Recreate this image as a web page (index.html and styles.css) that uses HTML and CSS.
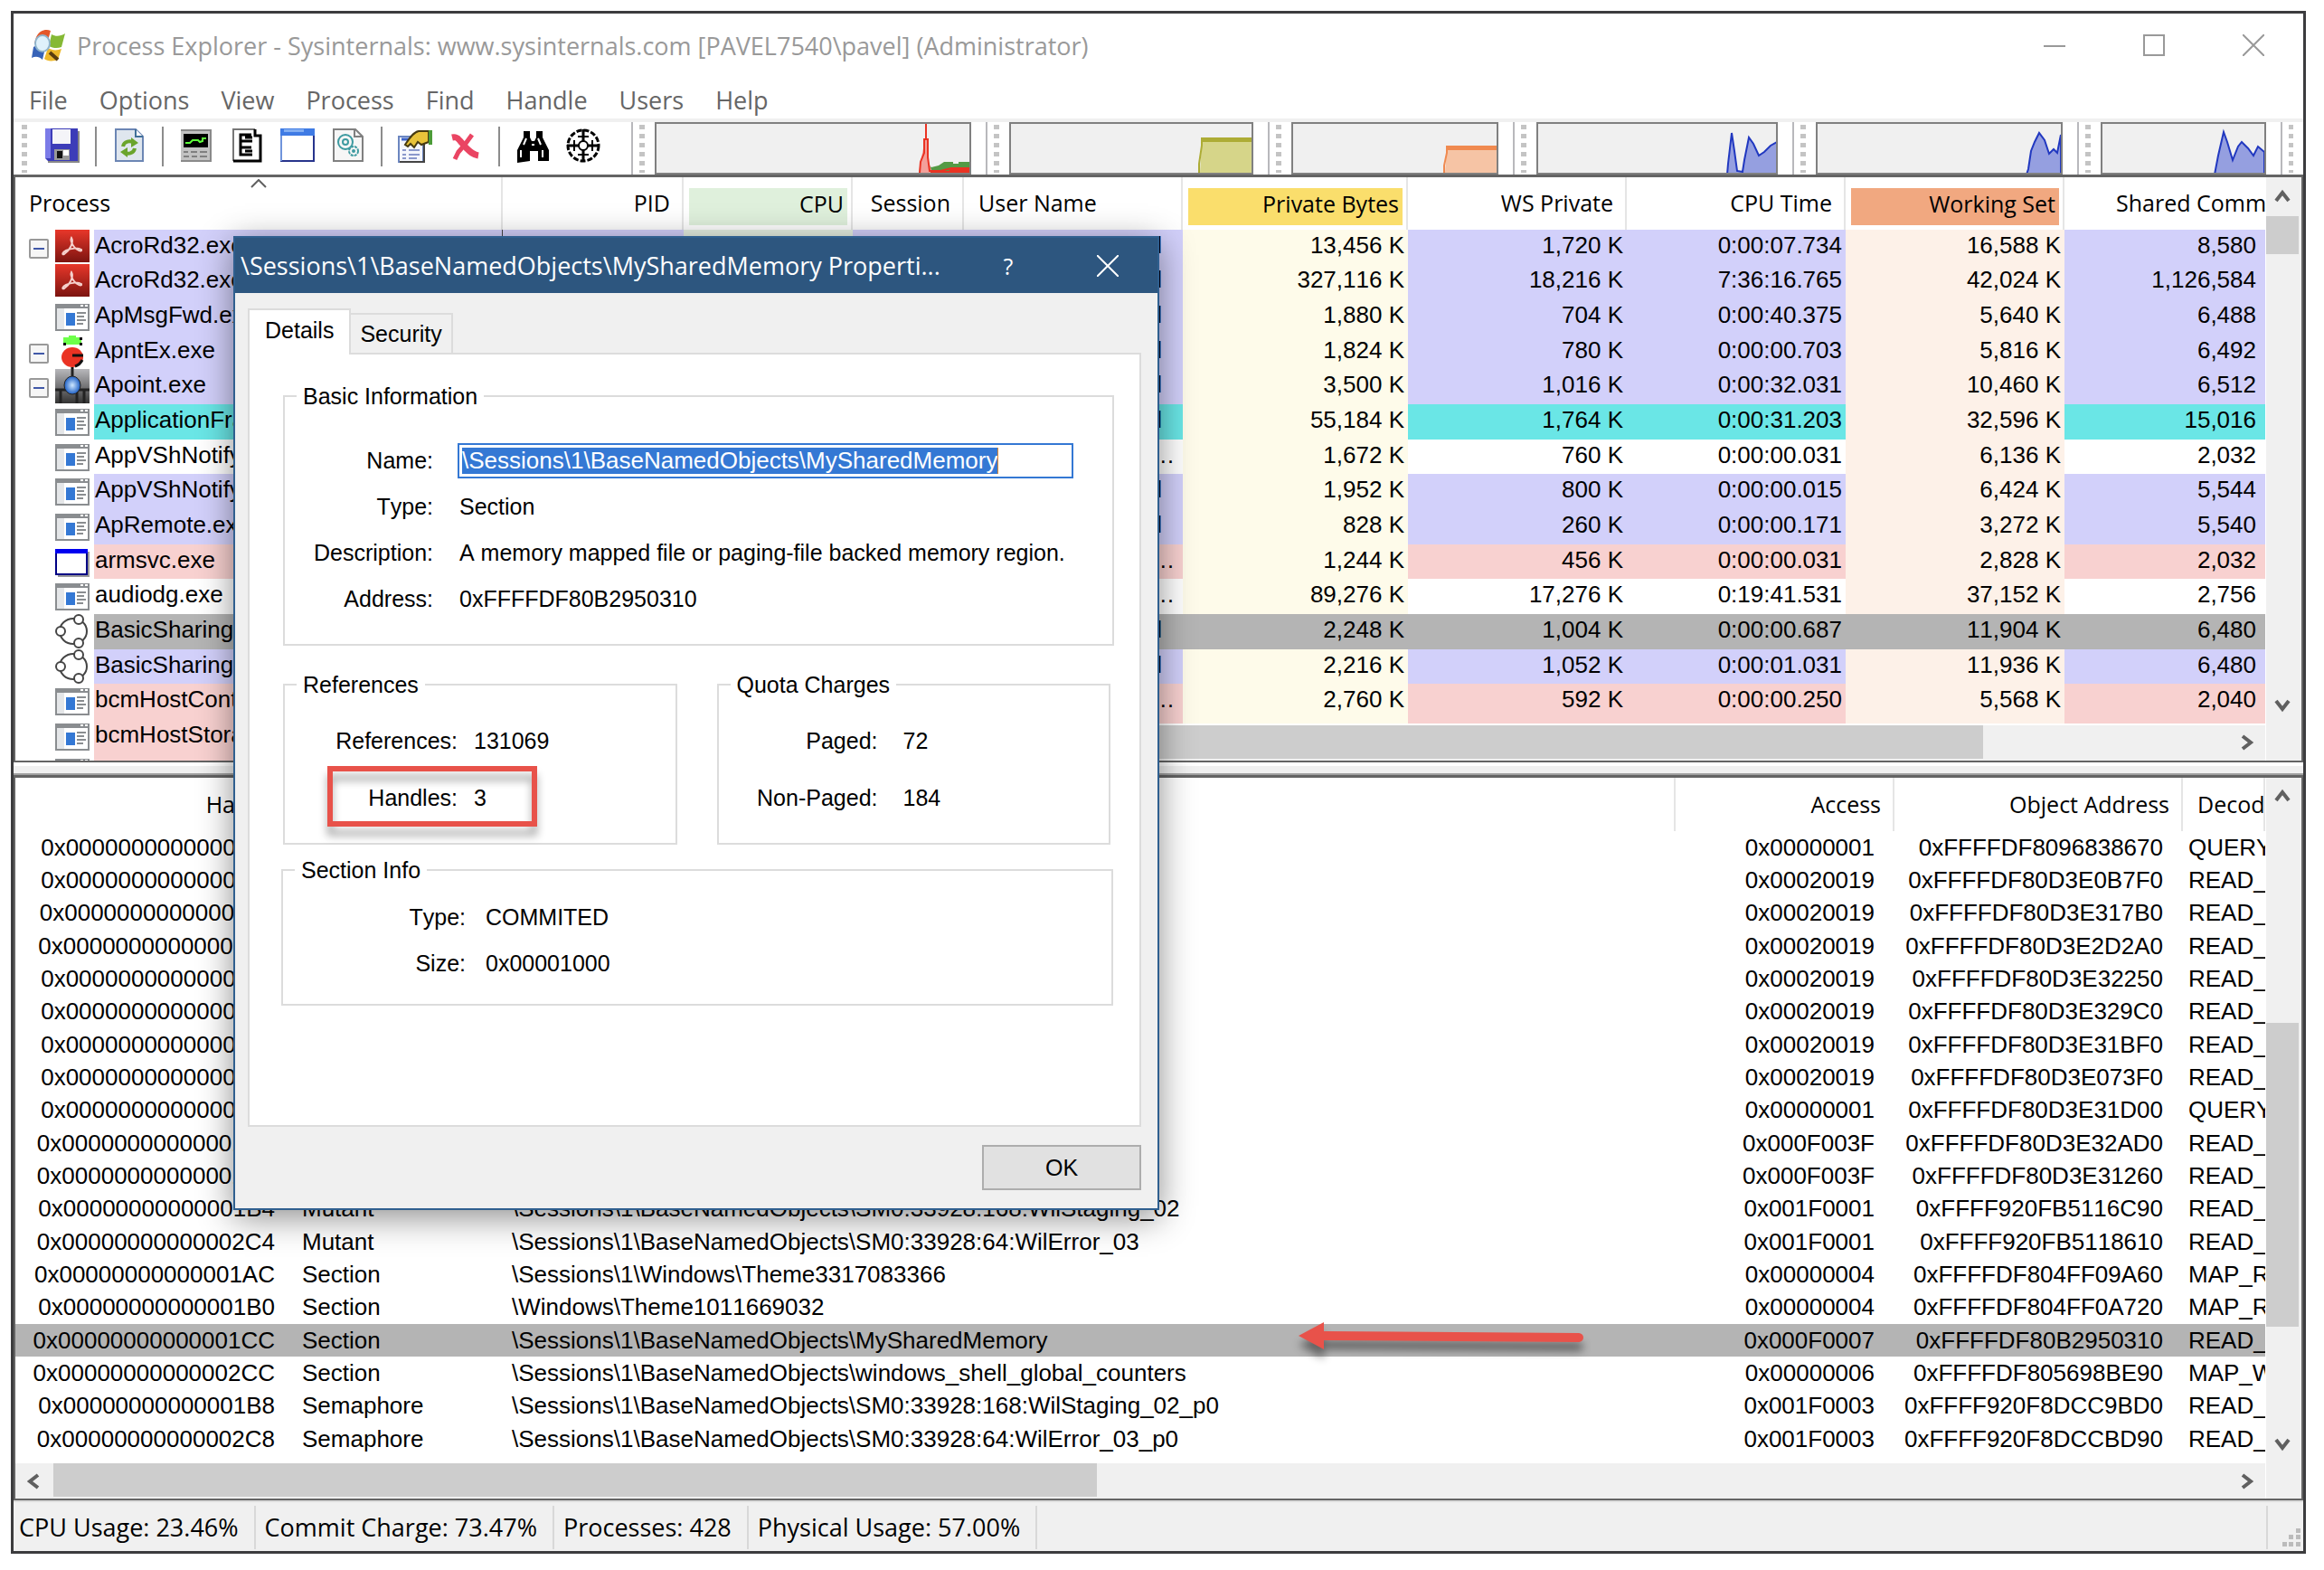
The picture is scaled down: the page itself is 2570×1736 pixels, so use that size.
FILE: index.html
```html
<!DOCTYPE html>
<html lang="en">

<head>
    <meta charset="utf-8">
    <title>Process Explorer</title>
    <meta name="viewport" content="width=device-width, initial-scale=1">
    <link rel="stylesheet" href="styles.css">
</head>

<body>
    <!-- shared icons -->
    <svg class="defs" aria-hidden="true">
        <symbol id="app" viewBox="0 0 38 38">
            <rect x="0" y="5" width="38" height="30" fill="#8a8d90"/>
            <rect x="2" y="10" width="34" height="23" fill="#fff"/>
            <rect x="2" y="10" width="8" height="23" fill="#e4e6e8"/>
            <path d="M28 6h3v2h-3zM33 6h3v2h-3z" fill="#fff"/>
            <rect x="12" y="15" width="10" height="14" fill="#3478d4"/>
            <path d="M24 15h10M24 19h8M24 23h10M24 27h7" stroke="#8a8d90" stroke-width="2"/>
        </symbol>
        <symbol id="acro" viewBox="0 0 38 38">
            <linearGradient id="red" x1="0" y1="0" x2="0" y2="1"><stop offset="0" stop-color="#e8372a"/><stop offset="1" stop-color="#7c1410"/></linearGradient>
            <rect width="38" height="36" fill="url(#red)"/>
            <path d="M18 9c3 5-2 14-8 18-3 1-2-2 2-4 6-3 14-3 17-1 1 3-5 1-8-3-3-4-4-8-3-10z" fill="none" stroke="#f5d0cc" stroke-width="2"/>
        </symbol>
        <symbol id="apnt" viewBox="0 0 38 38">
            <path d="M9 3h6V1h8v2h6v8H9z" fill="#6dff4a"/>
            <path d="M27 3h3v3h-3zM9 9h3v3H9zM27 9h3v3h-3z" fill="#111"/>
            <ellipse cx="19" cy="25" rx="12" ry="11" fill="#ea3323"/>
            <path d="M19 23h12M30 28c-2 4-5 6-8 7M19 36v2" stroke="#111" stroke-width="3" fill="none"/>
        </symbol>
        <symbol id="apoint" viewBox="0 0 38 38">
            <linearGradient id="gry" x1="0" y1="0" x2="0" y2="1"><stop offset="0" stop-color="#b8b8bc"/><stop offset="1" stop-color="#333"/></linearGradient>
            <radialGradient id="ball"><stop offset="0" stop-color="#cfe8ff"/><stop offset="1" stop-color="#1c5ec4"/></radialGradient>
            <rect width="38" height="38" fill="url(#gry)"/>
            <path d="M19 0v8M0 23h38M6 23v15M24 23v15M32 23v15" stroke="#222" stroke-width="3"/>
            <ellipse cx="19" cy="18" rx="9" ry="10" fill="url(#ball)" stroke="#222"/>
        </symbol>
        <symbol id="box" viewBox="0 0 38 38">
            <rect x="3" y="8" width="35" height="28" fill="#999"/>
            <rect x="1" y="6" width="34" height="27" fill="#fff" stroke="#000084" stroke-width="2"/>
            <rect x="0" y="5" width="36" height="5" fill="#0000f0"/>
        </symbol>
        <symbol id="share" viewBox="0 0 38 38">
            <g fill="#fff" stroke="#444" stroke-width="2">
                <ellipse cx="20" cy="19" rx="15" ry="14" fill="none"/>
                <circle cx="6" cy="19" r="5"/><circle cx="26" cy="6" r="5"/><circle cx="26" cy="32" r="5"/>
            </g>
        </symbol>
        <symbol id="chev" viewBox="0 0 20 20">
            <path d="M3 14l7-9 7 9" fill="none" stroke="#606060" stroke-width="4"/>
        </symbol>
    </svg>

    <main class="window">
        <header class="titlebar">
            <svg class="logo" viewBox="0 0 38 36">
                <path d="M5 9c4-8 11-9 16-7l-4 14H3z" fill="#e4582a"/>
                <path d="M22 6c5 3 10 2 15-1l-4 15c-5 2-10 1-14-1z" fill="#85b935"/>
                <path d="M2 20c5-3 9-1 13 1l-3 13c-4-4-8-4-12-2z" fill="#3763b8"/>
                <path d="M18 21c5 3 10 3 15 1l-4 12c-5 2-12 2-15-1z" fill="#edb82a"/>
                <path d="M20 26l9 8" stroke="#5a3d10" stroke-width="4"/>
                <ellipse cx="12" cy="16" rx="8" ry="9" fill="#dff1fb" stroke="#8fb4cc" stroke-width="2"/>
            </svg>
            <h1 class="title">Process Explorer - Sysinternals: www.sysinternals.com [PAVEL7540\pavel] (Administrator)</h1>
            <button class="winbtn" aria-label="Minimize"><svg viewBox="0 0 24 24"><path d="M0 13h24"/></svg></button>
            <button class="winbtn" aria-label="Maximize"><svg viewBox="0 0 24 24"><path d="M1 1h22v22H1z"/></svg></button>
            <button class="winbtn" aria-label="Close"><svg viewBox="0 0 24 24"><path d="M0 0l24 24M24 0L0 24"/></svg></button>
        </header>

        <nav class="menu">
            <button>File</button>
            <button>Options</button>
            <button>View</button>
            <button>Process</button>
            <button>Find</button>
            <button>Handle</button>
            <button>Users</button>
            <button>Help</button>
        </nav>

        <div class="toolbar">
            <div class="tools">
                <span class="grip"></span>
                <button class="tool" aria-label="Save">
                    <svg viewBox="0 0 38 38"><path d="M3 3h35v35H3z" fill="#888"/><path d="M0 0h36v36H3l-3-3z" fill="#3c3cb8"/><path d="M0 0h6v33H0z" fill="#7b7be8"/><path d="M8 1h20v16H8z" fill="#f4f4f8"/><path d="M10 23h17v12H10z" fill="#999"/><path d="M13 25h6v8h-6z" fill="#111"/><path d="M20 24h6v6h-6z" fill="#fff"/></svg>
                </button>
                <span class="sep"></span>
                <button class="tool" aria-label="Refresh">
                    <svg viewBox="0 0 38 38"><path d="M4 1h22l8 8v27H4z" fill="#dfe6ee" stroke="#6c86b4" stroke-width="2"/><path d="M26 1v8h8" fill="#fff" stroke="#3f6f98" stroke-width="2"/><path d="M12 20c1-6 8-7 12-4M25 22c-1 6-8 7-12 4" fill="none" stroke="#6aa42c" stroke-width="4"/><path d="M21 10l8 6-8 5zM17 32l-8-6 8-5z" fill="#6aa42c"/></svg>
                </button>
                <span class="sep"></span>
                <button class="tool" aria-label="System Information">
                    <svg viewBox="0 0 38 38"><path d="M2 2h34v34H2z" fill="#c2c2c2"/><path d="M2 2h34M35 2v34H2" fill="none" stroke="#8a8a8a" stroke-width="2"/><path d="M5 6h27v15H5z" fill="#000"/><path d="M7 16h5l3-3h6l2 2 3-1v-3h4" fill="none" stroke="#5dff3c" stroke-width="2"/><path d="M5 26h5m3 0h7m3 0h8M5 31h6m3 0h6m3 0h8" stroke="#808080" stroke-width="2"/></svg>
                </button>
                <button class="tool" aria-label="Process Tree">
                    <svg viewBox="0 0 38 38"><path d="M4 1h22l8 8v27H4z" fill="#fff"/><path d="M4 36V1h24" fill="none" stroke="#777" stroke-width="2"/><path d="M28 1v7h6v28H4" fill="none" stroke="#000" stroke-width="3"/><path d="M24 7H12v22h13M13 14h12M13 21h11M17 10h8M17 25h8" fill="none" stroke="#000" stroke-width="3"/></svg>
                </button>
                <button class="tool" aria-label="Lower Pane">
                    <svg viewBox="0 0 38 38"><path d="M1 1h36v35H1z" fill="#fff" stroke="#27348c" stroke-width="2"/><path d="M0 0h38v8H0z" fill="#3f7be4"/><path d="M4 1h22v3H4z" fill="#82aef2"/><path d="M1 8v28" stroke="#6f94dc" stroke-width="2"/></svg>
                </button>
                <button class="tool" aria-label="DLL View">
                    <svg viewBox="0 0 38 38"><path d="M3 1h24l8 8v27H3z" fill="#f6f6f6" stroke="#808080" stroke-width="2"/><path d="M26 1v8h9" fill="none" stroke="#808080" stroke-width="2"/><g fill="none" stroke="#3d9aa0" stroke-width="2"><circle cx="16" cy="15" r="8"/><circle cx="16" cy="15" r="3"/><circle cx="25" cy="25" r="5" stroke-dasharray="3 1"/><circle cx="25" cy="25" r="1"/></g></svg>
                </button>
                <span class="sep"></span>
                <button class="tool" aria-label="Properties">
                    <svg viewBox="0 0 38 38"><path d="M1 9h27v28H1z" fill="#f4f6fc" stroke="#6c86c0" stroke-width="2"/><path d="M29 12v25H2" fill="none" stroke="#444" stroke-width="2"/><path d="M4 12h10" stroke="#3b62c8" stroke-width="3"/><path d="M5 24h4m3 0h12M5 29h4m3 0h12M5 33h4m3 0h9" stroke="#8a98cc" stroke-width="2"/><path d="M8 18c4-6 9-14 15-15h11v12l-8 3-4-3-4 6-4-4-3 3z" fill="#e8c33a" stroke="#463a10" stroke-width="2"/><path d="M34 2h4v16h-4z" fill="#4c9c38"/></svg>
                </button>
                <button class="tool" aria-label="Kill Process">
                    <svg viewBox="0 0 38 38"><path d="M4 10c4-1 6 0 9 4l7 8c4 4 7 7 13 8" fill="none" stroke="#ea4563" stroke-width="7"/><path d="M26 7l-8 11-7 8-4 8" fill="none" stroke="#ea4563" stroke-width="5"/></svg>
                </button>
                <span class="sep"></span>
                <button class="tool" aria-label="Find Handle or DLL">
                    <svg viewBox="0 0 38 38"><path d="M2 38V24l7-14V3h7v7l2 4h3l2-4V3h7v7l7 14v12h-12V25h-9v11z" fill="#000"/><path d="M12 11l-3 7M25 11l3 7M6 24v8M30 24v8M18 18h3" stroke="#fff" stroke-width="2"/></svg>
                </button>
                <button class="tool" aria-label="Find Window's Process">
                    <svg viewBox="0 0 38 38"><circle cx="19" cy="19" r="17" fill="#fff" stroke="#000" stroke-width="3" stroke-dasharray="6 2"/><circle cx="19" cy="19" r="5" fill="none" stroke="#000" stroke-width="2"/><path d="M19 1v14M19 23v14M1 19h14M23 19h14" stroke="#000" stroke-width="3"/><path d="M13 9h12M13 29h12M9 13v12M29 13v12" stroke="#000" stroke-width="2"/></svg>
                </button>
            </div>
            <div class="band band-cpu"><span class="grip"></span>
                <div class="graph"><svg viewBox="0 0 60 54">
                    <path d="M7 54V46l5-3 6 5 8-2 6-4h10v2h6v-2h12v12z" fill="#549a45"/>
                    <path d="M4 54l2-12 5-25h3l1 25 4 12z" fill="#f3a09a"/>
                    <path d="M5 54l1-12 4-10V17h2V0v17h2v20l2 15h12l12-3h20" fill="none" stroke="#ea3323" stroke-width="2"/>
                    <path d="M17 52h20l4-4h19v6H17z" fill="#ea3323"/>
                </svg></div>
            </div>
            <div class="band band-commit"><span class="grip"></span>
                <div class="graph"><svg viewBox="0 0 60 54">
                    <path d="M3 54l2-34h55v34z" fill="#d6d589"/><path d="M6 15h54v5H6z" fill="#adac35"/>
                    <path d="M2 54V44l3-20V15" fill="none" stroke="#adac35" stroke-width="2"/>
                </svg></div>
            </div>
            <div class="band band-mem"><span class="grip"></span>
                <div class="graph"><svg viewBox="0 0 60 54">
                    <path d="M3 54l2-26h55v26z" fill="#f6c4a5"/><path d="M6 24h54v5H6z" fill="#f08a50"/>
                    <path d="M2 54v-8l3-14v-8" fill="none" stroke="#f08a50" stroke-width="2"/>
                </svg></div>
            </div>
            <div class="band band-io"><span class="grip"></span>
                <div class="graph"><svg viewBox="0 0 60 54">
                    <path class="io" d="M6 56l1-12 4-34 3 20 3 22 6 1 2-13 5-25 5 7 6 13 6-4 7-7 7-4v36z"/>
                </svg></div>
            </div>
            <div class="band band-net"><span class="grip"></span>
                <div class="graph"><svg viewBox="0 0 60 54">
                    <path class="io" d="M22 56l2-6 3-20 4-10 5-10 6 8 5 15 5-5 4 4 4-20v44z"/>
                </svg></div>
            </div>
            <div class="band band-disk"><span class="grip"></span>
                <div class="graph"><svg viewBox="0 0 60 54">
                    <path class="io" d="M5 56l4-21 6-26 4 11 6 20 6-15 4-5 7 7 6 8 5-10 7 6v25z"/>
                </svg></div>
            </div>
            <div class="band band-end"><span class="grip"></span></div>
        </div>

        <section class="pane pane-top">
            <table class="list procs">
                <thead><tr><th><span>Process</span><svg class="sort" viewBox="0 0 18 10"><path d="M1 9l8-8 8 8"/></svg></th></tr></thead>
                <tbody>
                    <tr class="own"><td><div><button class="toggle" aria-label="Collapse"></button><svg><use href="#acro"/></svg><span>AcroRd32.exe</span></div></td></tr>
                    <tr class="own"><td><div><svg><use href="#acro"/></svg><span>AcroRd32.exe</span></div></td></tr>
                    <tr class="own"><td><div><svg><use href="#app"/></svg><span>ApMsgFwd.exe</span></div></td></tr>
                    <tr class="own"><td><div><button class="toggle" aria-label="Collapse"></button><svg><use href="#apnt"/></svg><span>ApntEx.exe</span></div></td></tr>
                    <tr class="own"><td><div><button class="toggle" aria-label="Collapse"></button><svg><use href="#apoint"/></svg><span>Apoint.exe</span></div></td></tr>
                    <tr class="immersive"><td><div><svg><use href="#app"/></svg><span>ApplicationFrameHost.exe</span></div></td></tr>
                    <tr><td><div><svg><use href="#app"/></svg><span>AppVShNotify.exe</span></div></td></tr>
                    <tr class="own"><td><div><svg><use href="#app"/></svg><span>AppVShNotify.exe</span></div></td></tr>
                    <tr class="own"><td><div><svg><use href="#app"/></svg><span>ApRemote.exe</span></div></td></tr>
                    <tr class="service"><td><div><svg><use href="#box"/></svg><span>armsvc.exe</span></div></td></tr>
                    <tr><td><div><svg><use href="#app"/></svg><span>audiodg.exe</span></div></td></tr>
                    <tr class="selected"><td><div><svg><use href="#share"/></svg><span>BasicSharing.exe</span></div></td></tr>
                    <tr class="own"><td><div><svg><use href="#share"/></svg><span>BasicSharing.exe</span></div></td></tr>
                    <tr class="service"><td><div><svg><use href="#app"/></svg><span>bcmHostControl.exe</span></div></td></tr>
                    <tr class="service"><td><div><svg><use href="#app"/></svg><span>bcmHostStorage.exe</span></div></td></tr>
                    <tr class="service"><td><div><svg><use href="#app"/></svg><span>bcmUshUpgrade.exe</span></div></td></tr>
                </tbody>
            </table>
            <div class="main">
                <div class="clip">
                    <table class="list stats">
                        <colgroup><col class="w-pid"><col class="w-cpu"><col class="w-ses"><col class="w-user"><col class="w-priv"><col class="w-num"><col class="w-num"><col class="w-num"><col></colgroup>
                        <thead>
                            <tr><th>PID</th><th class="h-cpu"><span>CPU</span></th><th>Session</th><th class="left">User Name</th><th class="h-priv"><span>Private Bytes</span></th><th>WS Private</th><th>CPU Time</th><th class="h-work"><span>Working Set</span></th><th class="h-last">Shared Commit</th></tr>
                        </thead>
                        <tbody>
                            <tr class="own"><td>36112</td><td></td><td>1</td><td>PAVEL7540\pavel</td><td>13,456 K</td><td>1,720 K</td><td>0:00:07.734</td><td>16,588 K</td><td>8,580</td></tr>
                            <tr class="own"><td></td><td></td><td></td><td>PAVEL7540\pavel</td><td>327,116 K</td><td>18,216 K</td><td>7:36:16.765</td><td>42,024 K</td><td>1,126,584</td></tr>
                            <tr class="own"><td></td><td></td><td></td><td>PAVEL7540\pavel</td><td>1,880 K</td><td>704 K</td><td>0:00:40.375</td><td>5,640 K</td><td>6,488</td></tr>
                            <tr class="own"><td></td><td></td><td></td><td>PAVEL7540\pavel</td><td>1,824 K</td><td>780 K</td><td>0:00:00.703</td><td>5,816 K</td><td>6,492</td></tr>
                            <tr class="own"><td></td><td></td><td></td><td>PAVEL7540\pavel</td><td>3,500 K</td><td>1,016 K</td><td>0:00:32.031</td><td>10,460 K</td><td>6,512</td></tr>
                            <tr class="immersive"><td></td><td></td><td></td><td>PAVEL7540\pavel</td><td>55,184 K</td><td>1,764 K</td><td>0:00:31.203</td><td>32,596 K</td><td>15,016</td></tr>
                            <tr><td></td><td></td><td></td><td>NT AUTHORITY\SYSTEM</td><td>1,672 K</td><td>760 K</td><td>0:00:00.031</td><td>6,136 K</td><td>2,032</td></tr>
                            <tr class="own"><td></td><td></td><td></td><td>PAVEL7540\pavel</td><td>1,952 K</td><td>800 K</td><td>0:00:00.015</td><td>6,424 K</td><td>5,544</td></tr>
                            <tr class="own"><td></td><td></td><td></td><td>PAVEL7540\pavel</td><td>828 K</td><td>260 K</td><td>0:00:00.171</td><td>3,272 K</td><td>5,540</td></tr>
                            <tr class="service"><td></td><td></td><td></td><td>NT AUTHORITY\SYSTEM</td><td>1,244 K</td><td>456 K</td><td>0:00:00.031</td><td>2,828 K</td><td>2,032</td></tr>
                            <tr><td></td><td></td><td></td><td>NT AUTHORITY\SYSTEM</td><td>89,276 K</td><td>17,276 K</td><td>0:19:41.531</td><td>37,152 K</td><td>2,756</td></tr>
                            <tr class="selected"><td></td><td></td><td></td><td>PAVEL7540\pavel</td><td>2,248 K</td><td>1,004 K</td><td>0:00:00.687</td><td>11,904 K</td><td>6,480</td></tr>
                            <tr class="own"><td></td><td></td><td></td><td>PAVEL7540\pavel</td><td>2,216 K</td><td>1,052 K</td><td>0:00:01.031</td><td>11,936 K</td><td>6,480</td></tr>
                            <tr class="service"><td></td><td></td><td></td><td>NT AUTHORITY\SYSTEM</td><td>2,760 K</td><td>592 K</td><td>0:00:00.250</td><td>5,568 K</td><td>2,040</td></tr>
                            <tr class="service"><td></td><td></td><td></td><td></td><td></td><td></td><td></td><td></td><td></td></tr>
                        </tbody>
                    </table>
                </div>
                <div class="hbar">
                    <button class="left" aria-label="Scroll left"><svg><use href="#chev"/></svg></button>
                    <div class="track"><i class="thumb thumb-h1"></i></div>
                    <button class="right" aria-label="Scroll right"><svg><use href="#chev"/></svg></button>
                </div>
            </div>
            <div class="vbar">
                <button aria-label="Scroll up"><svg><use href="#chev"/></svg></button>
                <div class="track"><i class="thumb thumb-v1"></i></div>
                <button class="down" aria-label="Scroll down"><svg><use href="#chev"/></svg></button>
            </div>
        </section>

        <div class="splitter"></div>

        <section class="pane pane-bottom">
            <div class="main">
                <div class="clip">
                    <table class="list handles">
                        <colgroup><col class="w-handle"><col class="w-type"><col><col class="w-num"><col class="w-addr"><col class="w-dec"></colgroup>
                        <thead><tr><th>Handle</th><th class="left">Type</th><th class="left">Name</th><th>Access</th><th>Object Address</th><th class="left">Decoded Access</th></tr></thead>
                        <tbody>
                            <tr><td>0x0000000000000100</td><td></td><td></td><td>0x00000001</td><td>0xFFFFDF8096838670</td><td>QUERY_</td></tr>
                            <tr><td>0x0000000000000104</td><td></td><td></td><td>0x00020019</td><td>0xFFFFDF80D3E0B7F0</td><td>READ_</td></tr>
                            <tr><td>0x00000000000000F8</td><td></td><td></td><td>0x00020019</td><td>0xFFFFDF80D3E317B0</td><td>READ_</td></tr>
                            <tr><td>0x00000000000000E4</td><td></td><td></td><td>0x00020019</td><td>0xFFFFDF80D3E2D2A0</td><td>READ_</td></tr>
                            <tr><td>0x0000000000000110</td><td></td><td></td><td>0x00020019</td><td>0xFFFFDF80D3E32250</td><td>READ_</td></tr>
                            <tr><td>0x0000000000000128</td><td></td><td></td><td>0x00020019</td><td>0xFFFFDF80D3E329C0</td><td>READ_</td></tr>
                            <tr><td>0x0000000000000138</td><td></td><td></td><td>0x00020019</td><td>0xFFFFDF80D3E31BF0</td><td>READ_</td></tr>
                            <tr><td>0x0000000000000144</td><td></td><td></td><td>0x00020019</td><td>0xFFFFDF80D3E073F0</td><td>READ_</td></tr>
                            <tr><td>0x0000000000000158</td><td></td><td></td><td>0x00000001</td><td>0xFFFFDF80D3E31D00</td><td>QUERY_</td></tr>
                            <tr><td>0x000000000000016C</td><td></td><td></td><td>0x000F003F</td><td>0xFFFFDF80D3E32AD0</td><td>READ_</td></tr>
                            <tr><td>0x000000000000018C</td><td></td><td></td><td>0x000F003F</td><td>0xFFFFDF80D3E31260</td><td>READ_</td></tr>
                            <tr><td>0x00000000000001B4</td><td>Mutant</td><td>\Sessions\1\BaseNamedObjects\SM0:33928:168:WilStaging_02</td><td>0x001F0001</td><td>0xFFFF920FB5116C90</td><td>READ_</td></tr>
                            <tr><td>0x00000000000002C4</td><td>Mutant</td><td>\Sessions\1\BaseNamedObjects\SM0:33928:64:WilError_03</td><td>0x001F0001</td><td>0xFFFF920FB5118610</td><td>READ_</td></tr>
                            <tr><td>0x00000000000001AC</td><td>Section</td><td>\Sessions\1\Windows\Theme3317083366</td><td>0x00000004</td><td>0xFFFFDF804FF09A60</td><td>MAP_READ</td></tr>
                            <tr><td>0x00000000000001B0</td><td>Section</td><td>\Windows\Theme1011669032</td><td>0x00000004</td><td>0xFFFFDF804FF0A720</td><td>MAP_READ</td></tr>
                            <tr class="selected"><td>0x00000000000001CC</td><td>Section</td><td>\Sessions\1\BaseNamedObjects\MySharedMemory</td><td>0x000F0007</td><td>0xFFFFDF80B2950310</td><td>READ_</td></tr>
                            <tr><td>0x00000000000002CC</td><td>Section</td><td>\Sessions\1\BaseNamedObjects\windows_shell_global_counters</td><td>0x00000006</td><td>0xFFFFDF805698BE90</td><td>MAP_WRITE</td></tr>
                            <tr><td>0x00000000000001B8</td><td>Semaphore</td><td>\Sessions\1\BaseNamedObjects\SM0:33928:168:WilStaging_02_p0</td><td>0x001F0003</td><td>0xFFFF920F8DCC9BD0</td><td>READ_</td></tr>
                            <tr><td>0x00000000000002C8</td><td>Semaphore</td><td>\Sessions\1\BaseNamedObjects\SM0:33928:64:WilError_03_p0</td><td>0x001F0003</td><td>0xFFFF920F8DCCBD90</td><td>READ_</td></tr>
                        </tbody>
                    </table>
                </div>
                <div class="hbar">
                    <button class="left" aria-label="Scroll left"><svg><use href="#chev"/></svg></button>
                    <div class="track"><i class="thumb thumb-h2"></i></div>
                    <button class="right" aria-label="Scroll right"><svg><use href="#chev"/></svg></button>
                </div>
            </div>
            <div class="vbar">
                <button aria-label="Scroll up"><svg><use href="#chev"/></svg></button>
                <div class="track"><i class="thumb thumb-v2"></i></div>
                <button class="down" aria-label="Scroll down"><svg><use href="#chev"/></svg></button>
            </div>
            <svg class="arrow" viewBox="0 0 320 50">
                <path d="M28 15L310 17" stroke="#e8524a" stroke-width="10" stroke-linecap="round"/>
                <path d="M0 15L28 0v30z" fill="#e8524a"/>
            </svg>
        </section>

        <footer class="status">
            <span>CPU Usage: 23.46%</span>
            <span>Commit Charge: 73.47%</span>
            <span>Processes: 428</span>
            <span>Physical Usage: 57.00%</span>
            <div class="resize"><svg viewBox="0 0 20 20"><path d="M15 0h5v5h-5zM7 7h5v5H7zM15 7h5v5h-5zM0 15h5v5H0zM7 15h5v5H7zM15 15h5v5h-5z" fill="#bbb"/></svg></div>
        </footer>

        <!-- object properties -->
        <div class="dialog" role="dialog" aria-labelledby="dlg-title">
            <div class="dlg-head">
                <h2 id="dlg-title">\Sessions\1\BaseNamedObjects\MySharedMemory Properti...</h2>
                <button aria-label="Help">?</button>
                <button aria-label="Close"><svg viewBox="0 0 24 24"><path d="M0 0l24 24M24 0L0 24"/></svg></button>
            </div>
            <div class="dlg-body">
                <div class="tabs" role="tablist">
                    <button class="tab active" role="tab">Details</button>
                    <button class="tab" role="tab">Security</button>
                </div>
                <div class="sheet">
                    <fieldset class="basic">
                        <legend>Basic Information</legend>
                        <div class="row"><label for="name">Name:</label><div class="field"><input id="name" type="text" value="\Sessions\1\BaseNamedObjects\MySharedMemory"></div></div>
                        <div class="row"><b>Type:</b><span>Section</span></div>
                        <div class="row"><b>Description:</b><span>A memory mapped file or paging-file backed memory region.</span></div>
                        <div class="row"><b>Address:</b><span>0xFFFFDF80B2950310</span></div>
                    </fieldset>
                    <div class="pair">
                        <fieldset class="refs">
                            <legend>References</legend>
                            <div class="row"><b>References:</b><span>131069</span></div>
                            <div class="row"><b>Handles:</b><span>3</span></div>
                            <div class="mark"></div>
                        </fieldset>
                        <fieldset class="quota">
                            <legend>Quota Charges</legend>
                            <div class="row"><b>Paged:</b><span>72</span></div>
                            <div class="row"><b>Non-Paged:</b><span>184</span></div>
                        </fieldset>
                    </div>
                    <fieldset class="secinfo">
                        <legend>Section Info</legend>
                        <div class="row"><b>Type:</b><span>COMMITED</span></div>
                        <div class="row"><b>Size:</b><span>0x00001000</span></div>
                    </fieldset>
                </div>
                <div class="actions"><button class="ok">OK</button></div>
            </div>
        </div>
    </main>
</body>

</html>
```
FILE: styles.css
```css
* {
    box-sizing: border-box;
}

body {
    margin: 0;
    height: 100vh;
    padding: 12px 20px 18px 12px;
    background: #fff;
    color: #000;
    font-family: "Liberation Sans", Arial, sans-serif;
    font-size: 26px;
    font-kerning: none;
}

button {
    font: inherit;
    font-kerning: inherit;
    color: inherit;
    background: none;
    border: 0;
    padding: 0;
}

svg {
    display: block;
}

.defs {
    position: absolute;
    width: 0;
    height: 0;
}

.window {
    position: relative;
    display: flex;
    flex-direction: column;
    height: 100%;
    border: 3px solid #3c3c3e;
    background: #fff;
}

/* title bar and menu */
.titlebar {
    display: flex;
    align-items: center;
    height: 70px;
    padding-left: 20px;
    color: #999;
    font-family: "Open Sans", sans-serif;
}

.logo {
    width: 38px;
    height: 36px;
}

.title {
    flex: 1;
    margin: 0 0 0 12px;
    font-size: 27px;
    font-weight: 400;
    white-space: nowrap;
}

.winbtn {
    width: 110px;
    height: 70px;
}

.winbtn svg {
    width: 24px;
    height: 24px;
    margin: 0 auto;
    fill: none;
    stroke: #999;
    stroke-width: 2;
}

.menu {
    display: flex;
    gap: 35px;
    height: 50px;
    padding: 4px 17px 0;
    border-bottom: 4px solid #f0f0f0;
    color: #666;
    font-family: "Open Sans", sans-serif;
    font-size: 27px;
}

/* toolbar */
.toolbar {
    display: flex;
    height: 61px;
    border-bottom: 3px solid #646464;
}

.tools {
    display: flex;
    flex: 0 0 683px;
    padding-left: 9px;
}

.grip {
    width: 6px;
    margin: 3px 11px 2px 0;
    background: repeating-linear-gradient(#c4c4c4 0 5px, transparent 5px 10px);
}

.tool {
    width: 56px;
    height: 52px;
}

.tool svg {
    width: 38px;
    height: 38px;
    margin: 0 auto;
}

.sep {
    width: 2px;
    height: 44px;
    margin: 5px 8px 0;
    background: #8c8c8c;
}

.band {
    display: flex;
    min-width: 0;
    padding: 0 16px 0 7px;
    border-left: 2px solid #b8b8bc;
}

.band .graph {
    flex: 1;
    display: flex;
    justify-content: flex-end;
    border: 2px solid #808080;
    background: #f0f0f0;
}

.graph svg {
    width: 60px;
    height: 54px;
}

.graph .io {
    fill: #959fe0;
    stroke: #2138c0;
    stroke-width: 2;
}

.band-cpu { flex: 367 1 0; }
.band-commit { flex: 287 1 0; }
.band-mem { flex: 246 1 0; }
.band-io { flex: 284 1 0; }
.band-net { flex: 290 1 0; }
.band-disk { flex: 200 1 0; }
.band-end { flex: 0 0 25px; padding-right: 0; }

/* list panes */
.pane {
    position: relative;
    display: flex;
    min-height: 0;
    overflow: hidden;
    border: 2px solid #646464;
    border-top: 0;
}

.pane-top {
    flex: 648 1 0;
}

.pane-bottom {
    flex: 801 1 0;
    border-top: 3px solid #646464;
}

.splitter {
    flex: 0 0 14px;
    border-top: 4px solid #fff;
    border-bottom: 2px solid #a0a0a0;
    background: #f0f0f0;
}

.main {
    display: flex;
    flex: 1;
    flex-direction: column;
    min-width: 0;
}

.clip {
    flex: 1;
    min-height: 0;
    overflow: hidden;
    border-bottom: 2px solid #fff;
}

.list {
    table-layout: fixed;
    width: 100%;
    border-spacing: 0;
    white-space: nowrap;
}

.list th {
    position: relative;
    height: 58px;
    padding: 0 13px 2px 0;
    overflow: hidden;
    border-right: 2px solid #e5e5e5;
    font-family: "Open Sans", sans-serif;
    font-size: 25px;
    font-weight: 400;
    line-height: 34px;
    text-align: right;
}

.list th.left {
    padding-left: 16px;
    text-align: left;
}

.list td {
    padding: 0 4px 0 8px;
    overflow: hidden;
    line-height: 35px;
    text-align: right;
    text-overflow: ellipsis;
    vertical-align: top;
}

.own td { background: #d2d0fa; }
.immersive td { background: #6ae6e6; }
.service td { background: #f8d1d0; }
.selected td { background: #b4b4b4; }

.procs td div,
.stats td {
    height: 39px;
}

.procs tr:nth-child(3n + 1) td div,
.stats tr:nth-child(3n + 1) td {
    height: 38px;
}

.procs {
    flex: 0 0 539px;
    width: 539px;
    align-self: flex-start;
}

.list.procs th {
    padding-left: 15px;
    text-align: left;
}

.sort {
    position: absolute;
    top: 2px;
    left: 50%;
    width: 18px;
    height: 10px;
    margin-left: -9px;
    fill: none;
    stroke: #606060;
    stroke-width: 2;
}

.procs td {
    padding: 0;
    border-right: 1px solid #444;
    text-align: left;
}

.procs td div {
    display: flex;
    justify-content: flex-end;
    padding-left: 15px;
    background: linear-gradient(to right, #fff 87px, transparent 87px);
}

.procs td svg {
    width: 38px;
    height: 38px;
    margin-right: 5px;
}

.procs td span {
    flex: 0 0 451px;
    padding-left: 1px;
}

.toggle {
    width: 22px;
    height: 22px;
    margin: 10px auto 0 0;
    border: 2px solid #999;
    border-radius: 2px;
    background: linear-gradient(#4058a8, #4058a8) center / 12px 2px no-repeat #f6f6f6;
}

.w-pid { width: 200px; }
.w-cpu { width: 187px; }
.w-ses { width: 123px; }
.w-user { width: 242px; }
.w-priv { width: 249px; }
.w-num { width: 242px; }
.w-handle { width: 307px; }
.w-type { width: 232px; }
.w-addr { width: 319px; }
.w-dec { width: 91px; }

.list .h-cpu,
.list .h-priv,
.list .h-work {
    padding: 7px 4px 0 6px;
}

.h-cpu span,
.h-priv span,
.h-work span {
    display: block;
    height: 41px;
    padding-right: 4px;
}

.h-cpu span { background: #dff0dc; }
.h-priv span { background: #fade6c; }
.h-work span { background: #f1a880; }

.list .h-last {
    padding-left: 57px;
    text-align: left;
    border: 0;
}

.stats td:nth-child(4) {
    padding-right: 0;
    text-align: left;
}

.stats td:last-child {
    padding-right: 10px;
}

.stats tr:not(.selected) td:nth-child(2) { background: #e6f0e2; }
.stats tr:not(.selected) td:nth-child(5) { background: #fefbea; }
.stats tr:not(.selected) td:nth-child(8) { background: #fdf1e8; }

.handles td {
    height: 36px;
    padding-right: 22px;
    line-height: 36px;
}

.handles tr:nth-child(3n) td {
    height: 37px;
}

.list.handles th {
    height: 59px;
    padding-bottom: 0;
}

.handles th:first-child,
.handles th:nth-child(2) {
    border: 0;
}

.handles td:first-child {
    padding-right: 20px;
}

.handles td:nth-child(2),
.handles td:nth-child(3) {
    padding-left: 10px;
    text-align: left;
}

.handles td:last-child {
    padding: 0 0 0 6px;
    text-align: left;
    text-overflow: clip;
}

/* scroll bars */
.hbar,
.vbar {
    display: flex;
    background: #f0f0f0;
}

.hbar {
    height: 39px;
}

.vbar {
    flex: 0 0 40px;
    flex-direction: column;
    padding: 0 3px 40px 0;
    border-left: 1px solid #fff;
}

.hbar button {
    width: 42px;
}

.vbar button {
    height: 43px;
}

.hbar svg,
.vbar svg {
    width: 20px;
    height: 20px;
    margin: 0 auto;
}

.left svg { transform: rotate(-90deg); }
.right svg { transform: rotate(90deg); }
.down svg { transform: rotate(180deg); }

.track {
    flex: 1;
    position: relative;
}

.thumb {
    position: absolute;
    inset: 0;
    background: #cdcdcd;
}

.hbar .thumb {
    bottom: 2px;
}

.thumb-h1 { right: 270px; }
.thumb-h2 { right: 52%; }
.thumb-v1 { bottom: 92%; }
.thumb-v2 { top: 34%; bottom: 16%; }

.arrow {
    position: absolute;
    top: 602px;
    left: 1419px;
    width: 320px;
    height: 50px;
    filter: drop-shadow(0 10px 5px rgba(0, 0, 0, .45));
}

/* status bar */
.status {
    display: flex;
    flex: 0 0 56px;
    padding: 4px 0 2px;
    border-top: 2px solid #dcdcdc;
    background: #f0f0f0;
    font-family: "Open Sans", sans-serif;
    font-size: 27px;
    line-height: 48px;
}

.status span {
    padding: 0 17px 0 10px;
    border-right: 2px solid #d8d8d8;
}

.status span:first-child {
    padding-left: 6px;
}

.resize {
    display: flex;
    align-items: flex-end;
    width: 41px;
    margin-left: auto;
    padding: 3px 3px 3px 16px;
    border-left: 2px solid #d8d8d8;
}

.resize svg {
    width: 20px;
    height: 20px;
}

/* properties dialog */
.dialog {
    position: absolute;
    top: 246px;
    left: 243px;
    width: 1024px;
    border: 2px solid #2f5f8f;
    background: #f0f0f0;
    box-shadow: 0 8px 36px rgba(0, 0, 0, .45);
    font-size: 25px;
}

.dlg-head {
    display: flex;
    align-items: center;
    height: 61px;
    padding-left: 6px;
    background: #2d567f;
    color: #fff;
    font-family: "Open Sans", sans-serif;
}

.dlg-head h2 {
    flex: 1;
    margin: 0;
    font-size: 27px;
    font-weight: 400;
    white-space: nowrap;
}

.dlg-head button {
    width: 110px;
}

.dlg-head svg {
    width: 24px;
    height: 24px;
    margin: 0 auto;
    stroke: #fff;
    stroke-width: 2;
}

.dlg-body {
    padding: 17px 18px 20px 14px;
}

.tabs {
    display: flex;
    align-items: flex-end;
    height: 49px;
}

.tab {
    height: 44px;
    padding: 0 10px;
    border: 2px solid #dcdcdc;
    border-bottom: 0;
    border-left: 0;
}

.tab.active {
    position: relative;
    height: 51px;
    margin-bottom: -2px;
    padding: 0 17px 4px;
    border-left: 2px solid #dcdcdc;
    background: #fff;
}

.sheet {
    height: 856px;
    padding: 31px 28px 0 37px;
    border: 2px solid #dcdcdc;
    background: #fff;
}

fieldset {
    position: relative;
    margin: 0;
    padding: 0;
    border: 2px solid #dcdcdc;
}

legend {
    margin-left: 13px;
    padding: 0 7px;
    line-height: 30px;
}

.row {
    display: flex;
    align-items: center;
    height: 51px;
    white-space: nowrap;
}

.row b,
.row label {
    flex: none;
    font-weight: 400;
    text-align: right;
}

.basic {
    height: 291px;
    padding-top: 31px;
}

.basic .row b,
.basic .row label {
    width: 164px;
    margin-right: 29px;
}

.field {
    flex: 1;
    height: 39px;
    margin: 0 43px 0 -2px;
    padding: 3px;
    border: 2px solid #3478d4;
}

.field input {
    display: block;
    field-sizing: content;
    height: 29px;
    padding: 0;
    border: 0;
    border-right: 1px solid #e08a30;
    background: #3478d4;
    color: #fff;
    font: inherit;
    font-size: 26px;
    font-kerning: none;
}

.field input:focus {
    outline: 0;
}

.pair {
    display: flex;
    gap: 44px;
    margin-top: 28px;
    padding-right: 4px;
}

.pair fieldset {
    flex: 1;
    height: 192px;
    padding-top: 16px;
}

.pair .row {
    height: 63px;
}

.refs .row b {
    width: 191px;
    margin-right: 18px;
}

.quota .row b {
    width: 176px;
    margin-right: 28px;
}

.mark {
    position: absolute;
    top: 75px;
    left: 47px;
    width: 232px;
    height: 67px;
    border: 6px solid #e8524a;
    filter: drop-shadow(0 10px 5px rgba(0, 0, 0, .35));
}

.secinfo {
    height: 165px;
    margin: 13px 1px 0 -2px;
    padding-top: 12px;
}

.secinfo .row b {
    width: 202px;
    margin-right: 22px;
}

.actions {
    display: flex;
    justify-content: flex-end;
    padding-top: 20px;
}

.ok {
    width: 176px;
    height: 50px;
    border: 2px solid #adadad;
    background: #e1e1e1;
}
```
